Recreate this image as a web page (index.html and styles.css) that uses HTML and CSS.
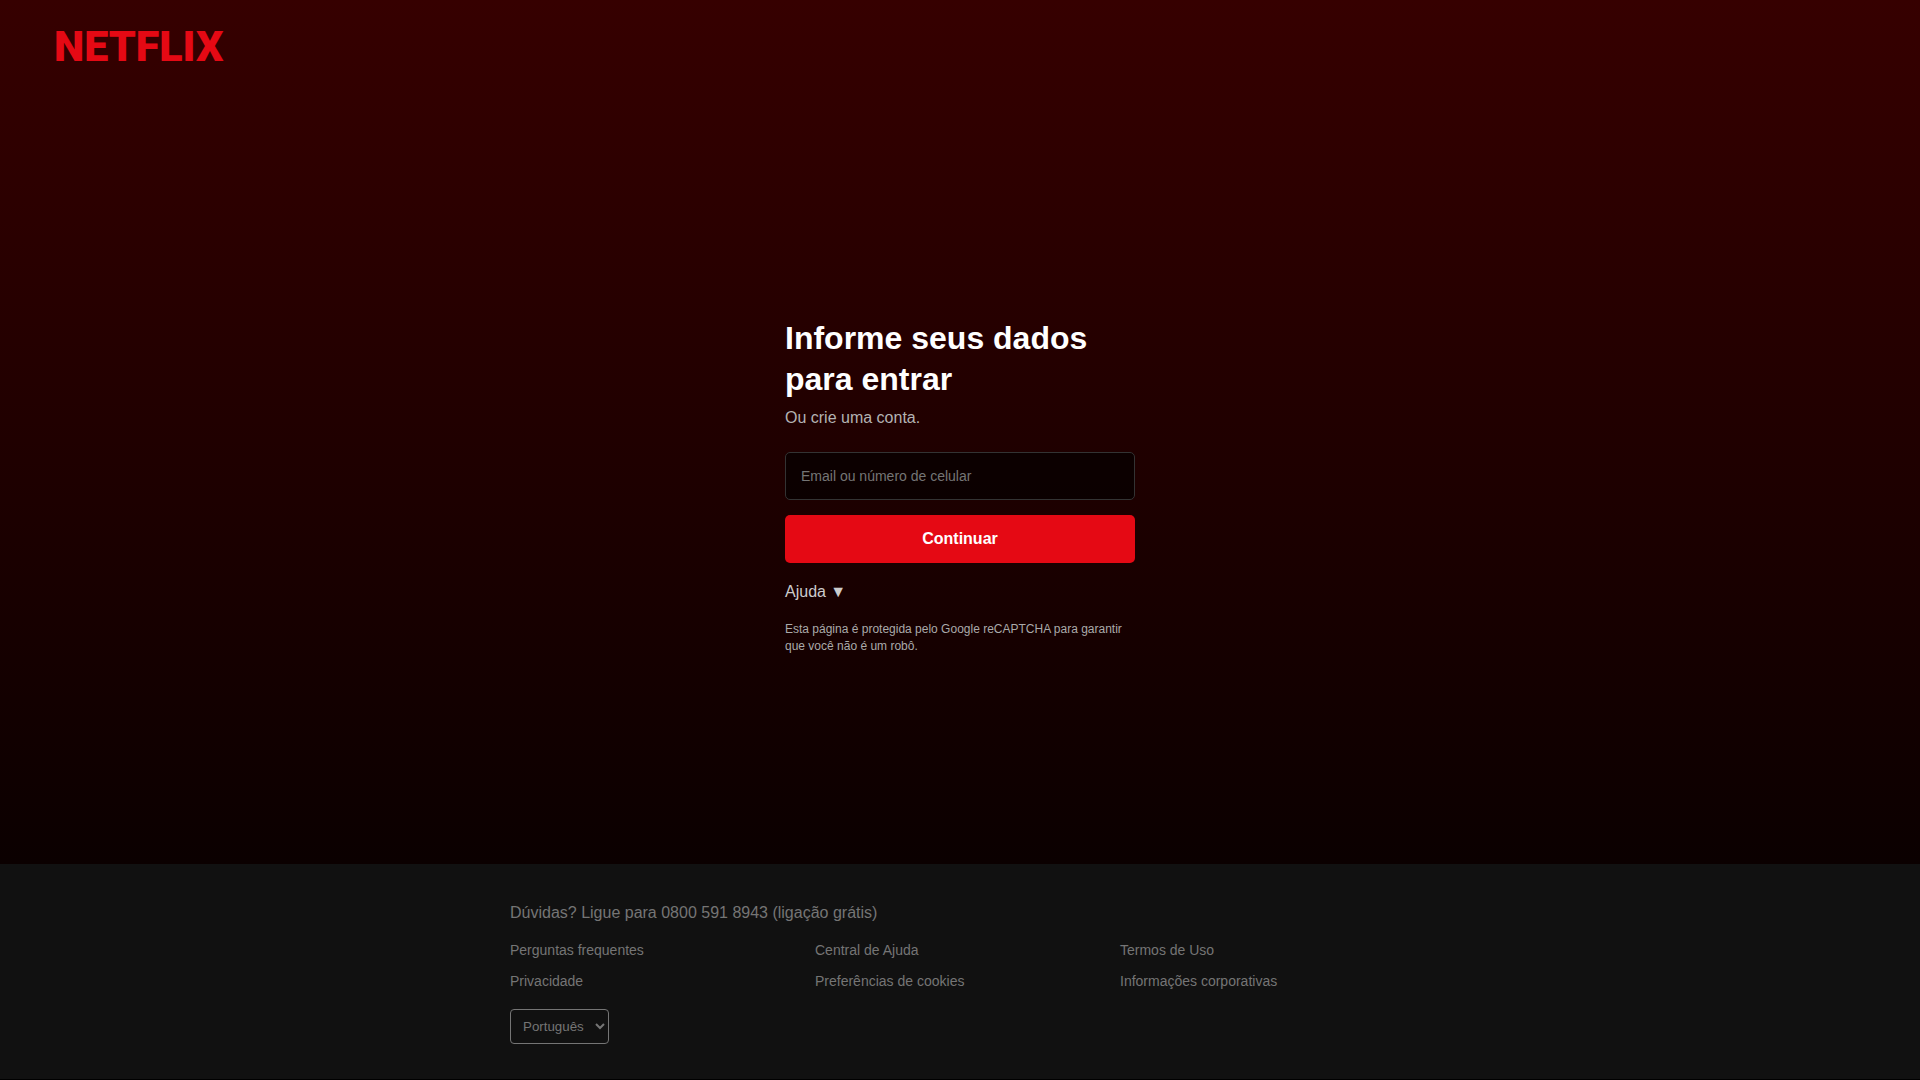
FILE: index.html
```html
<!DOCTYPE html>
<html lang="pt-BR">
	<head>
		<meta charset="UTF-8" />
		<meta name="viewport" content="width=device-width, initial-scale=1.0" />
		<title>Netflix</title>
		<link rel="stylesheet" href="styles.css">
	</head>
	<body>
		<div class="page">
			<header class="header">
				<a class="logo" href="#">NETFLIX</a>
			</header>

			<main class="main">
				<form class="login-form">
					<h1>Informe seus dados para entrar</h1>
					<p class="subtitle">Ou crie uma conta.</p>
					<input
						type="text"
						id="login"
						aria-label="Email ou número de celular"
						placeholder="Email ou número de celular"
					/>
					<button type="submit">Continuar</button>
					<a class="help" href="#">Ajuda ▼</a>
					<p class="recaptcha">
						Esta página é protegida pelo Google reCAPTCHA para garantir que você
						não é um robô.
					</p>
				</form>
			</main>
		</div>

		<footer class="footer">
			<div class="footer-content">
				<p class="phone">Dúvidas? Ligue para 0800 591 8943 (ligação grátis)</p>
				<div class="links">
					<a href="#">Perguntas frequentes</a>
					<a href="#">Central de Ajuda</a>
					<a href="#">Termos de Uso</a>
					<a href="#">Privacidade</a>
					<a href="#">Preferências de cookies</a>
					<a href="#">Informações corporativas</a>
				</div>
				<select aria-label="Idioma">
					<option>Português</option>
					<option>English</option>
				</select>
			</div>
		</footer>
	</body>
</html>
```

FILE: styles.css
```css
* {
	margin: 0;
	padding: 0;
	box-sizing: border-box;
}
body {
	min-height: 100vh;
	font-family: "Liberation Sans", Arial, sans-serif;
	color: white;
	background: linear-gradient(to bottom, #360000, #000000);
}
a {
	text-decoration: none;
}
.page {
	min-height: 80vh;
	display: flex;
	flex-direction: column;
}
.header {
	height: 109px;
	padding: 20px 54px;
}
.logo {
	display: inline-block;
	font-family: Roboto, "Liberation Sans", sans-serif;
	font-size: 43px;
	font-weight: 900;
	line-height: 52px;
	color: #e50914;
}
.main {
	flex: 1;
	display: flex;
	align-items: center;
	justify-content: center;
}
.login-form {
	width: 350px;
	display: flex;
	flex-direction: column;
}
.login-form h1 {
	font-size: 32px;
	line-height: 41px;
	margin-bottom: 9px;
}
.subtitle {
	font-size: 16px;
	line-height: 18px;
	color: #b3b3b3;
	margin-bottom: 25px;
}
.login-form input {
	height: 48px;
	padding: 0 15px;
	margin-bottom: 15px;
	font-family: inherit;
	font-size: 14px;
	color: white;
	background-color: rgba(0, 0, 0, 0.6);
	border: 1px solid #333;
	border-radius: 5px;
}
.login-form input::placeholder {
	color: #757575;
}
.login-form button {
	height: 48px;
	margin-bottom: 20px;
	font-family: inherit;
	font-size: 16px;
	font-weight: bold;
	color: white;
	background-color: #e50914;
	border: none;
	border-radius: 5px;
	cursor: pointer;
}
.login-form button:hover {
	background-color: #c11119;
}
.help {
	font-family: Arial, "DejaVu Sans", sans-serif;
	font-size: 16px;
	line-height: 18px;
	color: #ccc;
	margin-bottom: 20px;
}
.recaptcha {
	font-size: 12px;
	line-height: 17px;
	color: #aaa;
}
.footer {
	padding: 40px 20px 35px;
	background-color: #111;
	color: #757575;
}
.footer-content {
	max-width: 900px;
	margin: 0 auto;
}
.phone {
	font-size: 16px;
	line-height: 18px;
	margin-bottom: 20px;
}
.links {
	display: grid;
	grid-template-columns: repeat(3, 1fr);
	gap: 15px;
	margin-bottom: 20px;
}
.links a {
	font-size: 14px;
	line-height: 16px;
	color: #757575;
}
.links a:hover {
	text-decoration: underline;
}
.footer select {
	display: block;
	height: 35px;
	padding: 8px;
	font-family: inherit;
	color: #757575;
	background-color: #111;
	border: 1px solid #757575;
	border-radius: 4px;
}
```
